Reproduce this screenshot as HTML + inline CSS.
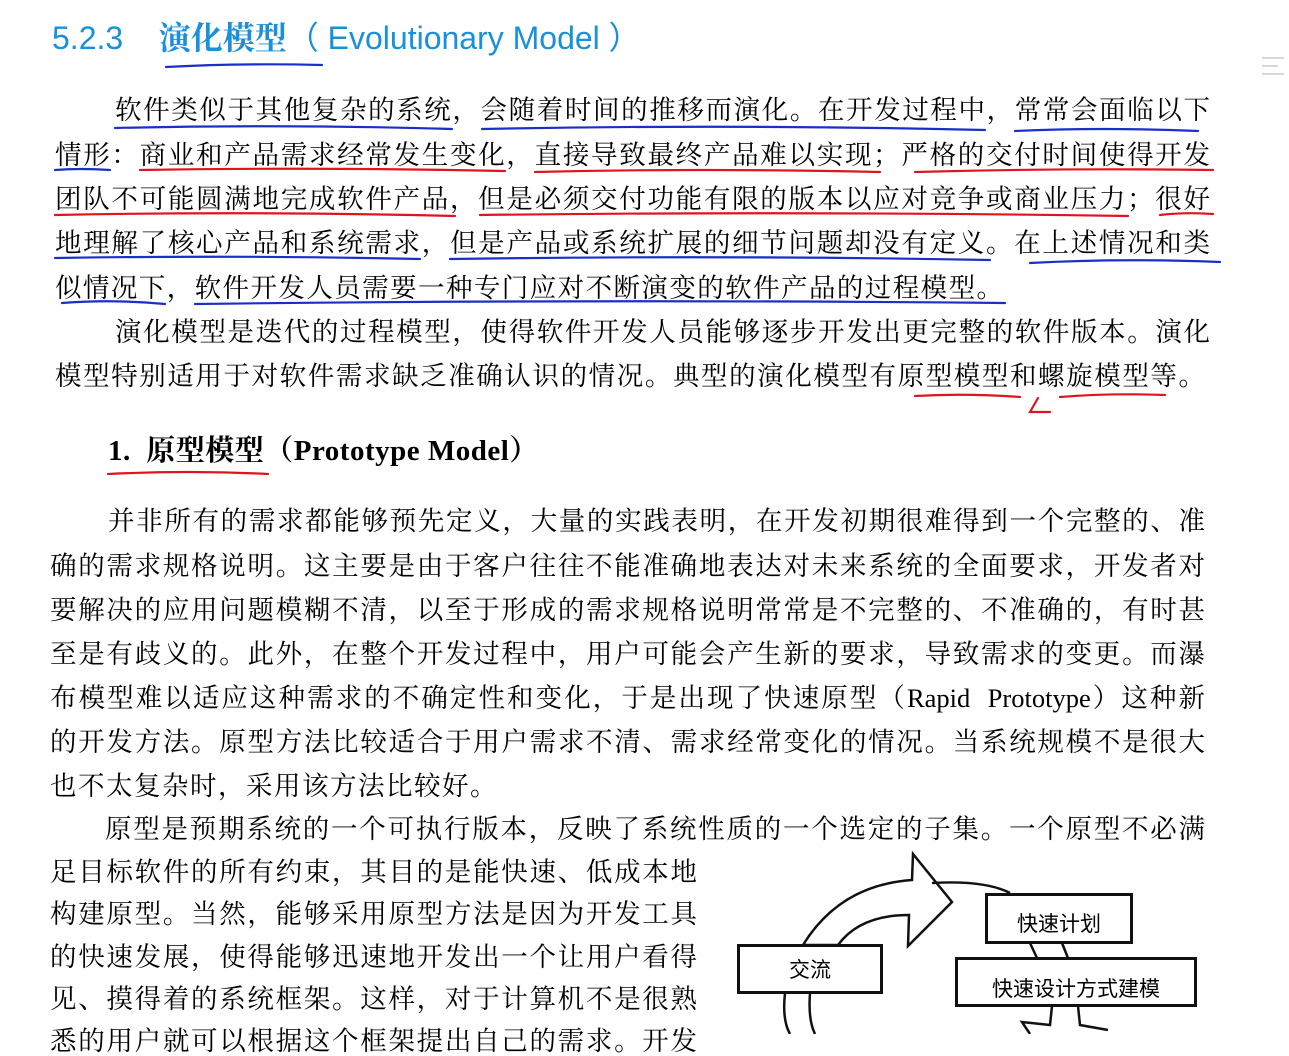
<!DOCTYPE html>
<html><head><meta charset="utf-8"><style>
body{margin:0;width:1289px;height:1034px;background:#fff;overflow:hidden;position:relative;font-family:"Liberation Serif","Noto Serif CJK SC",serif;color:#000}
.l{position:absolute;font-size:26.5px;line-height:30px;white-space:nowrap;text-align:justify;text-align-last:justify}
.n{text-align-last:left}
.h{position:absolute;left:52px;top:13px;font-family:"Liberation Sans","Noto Sans CJK SC",sans-serif;color:#1990dc;font-size:32px;white-space:nowrap}
.box{position:absolute;border:3px solid #111;background:#fff;font-family:"Liberation Sans","Noto Sans CJK SC",sans-serif;font-size:21px;text-align:center;box-sizing:border-box}
</style></head><body>
<div class="h">5.2.3&nbsp;&nbsp;&nbsp;&nbsp;<span style="font-family:'Noto Serif CJK SC',serif;font-weight:bold">演化模型</span>（ Evolutionary Model ）</div>

<div class="l" style="left:115px;top:95px;width:1095px">软件类似于其他复杂的系统，会随着时间的推移而演化。在开发过程中，常常会面临以下</div>
<div class="l" style="left:55px;top:140px;width:1155px">情形：商业和产品需求经常发生变化，直接导致最终产品难以实现；严格的交付时间使得开发</div>
<div class="l" style="left:55px;top:184px;width:1155px">团队不可能圆满地完成软件产品，但是必须交付功能有限的版本以应对竞争或商业压力；很好</div>
<div class="l" style="left:55px;top:228px;width:1155px">地理解了核心产品和系统需求，但是产品或系统扩展的细节问题却没有定义。在上述情况和类</div>
<div class="l" style="left:55px;top:273px;width:948px">似情况下，软件开发人员需要一种专门应对不断演变的软件产品的过程模型。</div>
<div class="l" style="left:115px;top:317px;width:1095px">演化模型是迭代的过程模型，使得软件开发人员能够逐步开发出更完整的软件版本。演化</div>
<div class="l" style="left:55px;top:361px;width:1150px">模型特别适用于对软件需求缺乏准确认识的情况。典型的演化模型有原型模型和螺旋模型等。</div>

<div class="l n" style="left:108px;top:436px;font-weight:bold;font-size:29px;letter-spacing:0.5px">1.&nbsp; 原型模型（Prototype Model）</div>

<div class="l" style="left:108px;top:506px;width:1097px">并非所有的需求都能够预先定义，大量的实践表明，在开发初期很难得到一个完整的、准</div>
<div class="l" style="left:50px;top:551px;width:1155px">确的需求规格说明。这主要是由于客户往往不能准确地表达对未来系统的全面要求，开发者对</div>
<div class="l" style="left:50px;top:595px;width:1155px">要解决的应用问题模糊不清，以至于形成的需求规格说明常常是不完整的、不准确的，有时甚</div>
<div class="l" style="left:50px;top:639px;width:1155px">至是有歧义的。此外，在整个开发过程中，用户可能会产生新的要求，导致需求的变更。而瀑</div>
<div class="l" style="left:50px;top:683px;width:1155px">布模型难以适应这种需求的不确定性和变化，于是出现了快速原型（Rapid&nbsp; Prototype）这种新</div>
<div class="l" style="left:50px;top:727px;width:1155px">的开发方法。原型方法比较适合于用户需求不清、需求经常变化的情况。当系统规模不是很大</div>
<div class="l n" style="left:50px;top:771px;letter-spacing:1.5px">也不太复杂时，采用该方法比较好。</div>
<div class="l" style="left:105px;top:814px;width:1100px">原型是预期系统的一个可执行版本，反映了系统性质的一个选定的子集。一个原型不必满</div>
<div class="l" style="left:50px;top:857px;width:647px">足目标软件的所有约束，其目的是能快速、低成本地</div>
<div class="l" style="left:50px;top:899px;width:647px">构建原型。当然，能够采用原型方法是因为开发工具</div>
<div class="l" style="left:50px;top:942px;width:647px">的快速发展，使得能够迅速地开发出一个让用户看得</div>
<div class="l" style="left:50px;top:984px;width:647px">见、摸得着的系统框架。这样，对于计算机不是很熟</div>
<div class="l" style="left:50px;top:1026px;width:647px">悉的用户就可以根据这个框架提出自己的需求。开发</div>

<svg width="1289" height="1034" style="position:absolute;left:0;top:0" fill="none">
<g stroke="#1a2fc8" stroke-width="2.2" stroke-linecap="round">
<path d="M166 67 Q240 63 322 65"/>
<path d="M115 128 Q280 124 452 129"/><path d="M482 129 Q730 124 985 130"/><path d="M1015 131 Q1100 127 1198 131"/>
<path d="M55 170 Q80 168 110 170"/>
<path d="M55 258 Q240 255 420 259"/><path d="M450 259 Q720 255 990 260"/><path d="M1030 263 Q1120 258 1220 262"/>
<path d="M62 303 Q110 299 165 304"/><path d="M195 304 Q600 299 1005 303"/>
</g>
<g stroke="#e0141e" stroke-width="2.2" stroke-linecap="round">
<path d="M140 170 Q320 167 505 171"/><path d="M535 172 Q700 168 880 172"/><path d="M915 172 Q1060 168 1213 170"/>
<path d="M55 215 Q250 211 455 216"/><path d="M480 215 Q800 211 1128 216"/><path d="M1160 215 Q1185 212 1213 214"/>
<path d="M915 396 Q965 393 1020 397"/><path d="M1060 397 Q1110 393 1165 395"/>
<path d="M1038 398 L1030 412 L1050 412"/>
<path d="M108 474 Q190 470 268 474"/>
</g>
<g stroke="#ccc" stroke-width="1.5"><path d="M1262 58h22M1262 66h16M1262 74h22"/></g>
<g stroke="#111" stroke-width="2.5" fill="#fff">
<path d="M803 945 Q840 885 912 880 L913 854 L952 902 L908 946 L909 915 Q860 915 838 945 Z"/>
<path d="M932 883 Q985 880 1010 893" />
<path d="M1030 943 L1037 958 M1062 943 L1068 958"/>
<path d="M1052 1006 L1050 1025 L1022 1022 L1030 1034 M1078 1006 L1080 1025 L1108 1030"/>
<path d="M785 993 Q782 1020 790 1034 M810 993 Q808 1020 815 1034" fill="none"/>
</g>
</svg>
<div class="box" style="left:737px;top:944px;width:146px;height:50px;line-height:48px">交流</div>
<div class="box" style="left:985px;top:893px;width:148px;height:51px;line-height:57px">快速计划</div>
<div class="box" style="left:955px;top:957px;width:242px;height:50px;line-height:60px">快速设计方式建模</div>
</body></html>
